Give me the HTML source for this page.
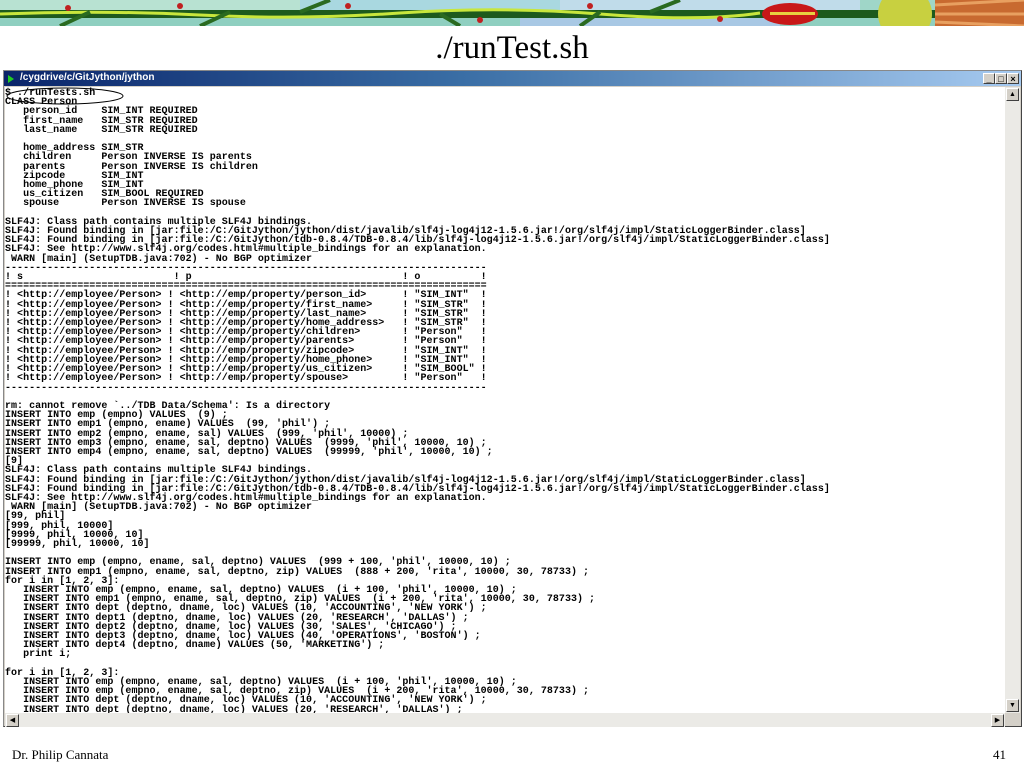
<!DOCTYPE html>
<html><head><meta charset="utf-8"><style>
html,body{margin:0;padding:0;width:1024px;height:768px;overflow:hidden;background:#fff;position:relative;font-family:"Liberation Serif",serif}
.ban{position:absolute;left:0;top:0;width:1024px;height:26px}
.title{position:absolute;left:0;width:1024px;top:28px;text-align:center;font-size:33px;color:#000;line-height:40px}
.win{position:absolute;left:3px;top:70px;width:1017px;height:655px;border:1px solid #888;border-right-color:#444;border-bottom-color:#444;background:#d4d0c8}
.tb{position:absolute;left:0;top:0;width:1017px;height:15px;background:linear-gradient(90deg,#0a246a 0%,#3a6ea5 45%,#a6caf0 100%)}
.tb span{position:absolute;left:16px;top:1px;font:bold 10px "Liberation Sans",sans-serif;color:#fff}
.tb i{position:absolute;left:4px;top:4px;width:0;height:0;border-left:6px solid #2c2;border-top:4px solid transparent;border-bottom:4px solid transparent}
.btn{position:absolute;top:2px;width:12px;height:11px;background:#d4d0c8;border:1px solid #fff;border-right-color:#404040;border-bottom-color:#404040;font:bold 9px "Liberation Sans",sans-serif;line-height:10px;text-align:center;color:#000;box-sizing:border-box}
.con{position:absolute;left:1px;top:16px;width:1000px;height:626px;background:#fff;overflow:hidden}
pre{margin:0;position:absolute;left:0;top:2px;font:bold 10px/9.2px "Liberation Mono",monospace;color:#000;letter-spacing:0.02px}
.vs{position:absolute;left:1001px;top:16px;width:15px;height:626px;background:#ebeae6}
.hs{position:absolute;left:1px;top:642px;width:1000px;height:14px;background:#ebeae6}
.ab{position:absolute;width:13px;height:13px;background:#d4d0c8;border:1px solid #fff;border-right-color:#404040;border-bottom-color:#404040;box-sizing:border-box;font:7px "Liberation Sans",sans-serif;line-height:11px;text-align:center}
.foot{position:absolute;top:747px;font-size:13px;color:#000}
</style></head><body>
<svg class="ban" viewBox="0 0 1024 26" preserveAspectRatio="none">
<rect width="1024" height="26" fill="#9fd6c8"/>
<rect x="0" y="0" width="300" height="12" fill="#b8e2d2"/>
<rect x="300" y="0" width="260" height="12" fill="#a9d8e0"/>
<rect x="560" y="0" width="300" height="12" fill="#c0dcea"/>
<rect x="0" y="18" width="1024" height="8" fill="#8fcfc0"/>
<rect x="520" y="18" width="260" height="8" fill="#a8c8e4"/>
<rect x="0" y="10" width="1024" height="8" fill="#1d5a1d"/>
<path d="M0 14 Q100 10 200 15 T400 13 T600 14 T760 13" stroke="#c8e63c" stroke-width="3" fill="none"/>
<path d="M60 26 L90 12 M200 26 L230 12 M330 0 L300 12 M460 26 L440 14 M680 0 L650 12 M580 26 L600 12" stroke="#2a6a20" stroke-width="4"/>
<ellipse cx="790" cy="14" rx="28" ry="11" fill="#c81818"/>
<rect x="770" y="12" width="45" height="3" fill="#e8d040"/>
<circle cx="905" cy="14" r="27" fill="#c8d040"/>
<rect x="935" y="0" width="89" height="26" fill="#c86a30"/>
<path d="M935 5 L1024 0 M935 14 L1024 14 M935 22 L1024 26" stroke="#e8a060" stroke-width="3"/>
<circle cx="68" cy="8" r="3" fill="#c02020"/><circle cx="180" cy="6" r="3" fill="#c02020"/><circle cx="348" cy="6" r="3" fill="#c02020"/><circle cx="480" cy="20" r="3" fill="#c02020"/><circle cx="590" cy="6" r="3" fill="#c02020"/><circle cx="720" cy="19" r="3" fill="#c02020"/>
</svg>
<div class="title">./runTest.sh</div>
<div class="win">
<div class="tb"><i></i><span>/cygdrive/c/GitJython/jython</span>
<div class="btn" style="left:979px">_</div><div class="btn" style="left:991px">□</div><div class="btn" style="left:1003px">×</div></div>
<div class="con"><pre>$ ./runTests.sh
CLASS Person
   person_id    SIM_INT REQUIRED
   first_name   SIM_STR REQUIRED
   last_name    SIM_STR REQUIRED

   home_address SIM_STR
   children     Person INVERSE IS parents
   parents      Person INVERSE IS children
   zipcode      SIM_INT
   home_phone   SIM_INT
   us_citizen   SIM_BOOL REQUIRED
   spouse       Person INVERSE IS spouse

SLF4J: Class path contains multiple SLF4J bindings.
SLF4J: Found binding in [jar:file:/C:/GitJython/jython/dist/javalib/slf4j-log4j12-1.5.6.jar!/org/slf4j/impl/StaticLoggerBinder.class]
SLF4J: Found binding in [jar:file:/C:/GitJython/tdb-0.8.4/TDB-0.8.4/lib/slf4j-log4j12-1.5.6.jar!/org/slf4j/impl/StaticLoggerBinder.class]
SLF4J: See http://www.slf4j.org/codes.html#multiple_bindings for an explanation.
 WARN [main] (SetupTDB.java:702) - No BGP optimizer
--------------------------------------------------------------------------------
! s                         ! p                                   ! o          !
================================================================================
! &lt;http://employee/Person&gt; ! &lt;http://emp/property/person_id&gt;      ! "SIM_INT"  !
! &lt;http://employee/Person&gt; ! &lt;http://emp/property/first_name&gt;     ! "SIM_STR"  !
! &lt;http://employee/Person&gt; ! &lt;http://emp/property/last_name&gt;      ! "SIM_STR"  !
! &lt;http://employee/Person&gt; ! &lt;http://emp/property/home_address&gt;   ! "SIM_STR"  !
! &lt;http://employee/Person&gt; ! &lt;http://emp/property/children&gt;       ! "Person"   !
! &lt;http://employee/Person&gt; ! &lt;http://emp/property/parents&gt;        ! "Person"   !
! &lt;http://employee/Person&gt; ! &lt;http://emp/property/zipcode&gt;        ! "SIM_INT"  !
! &lt;http://employee/Person&gt; ! &lt;http://emp/property/home_phone&gt;     ! "SIM_INT"  !
! &lt;http://employee/Person&gt; ! &lt;http://emp/property/us_citizen&gt;     ! "SIM_BOOL" !
! &lt;http://employee/Person&gt; ! &lt;http://emp/property/spouse&gt;         ! "Person"   !
--------------------------------------------------------------------------------

rm: cannot remove `../TDB Data/Schema': Is a directory
INSERT INTO emp (empno) VALUES  (9) ;
INSERT INTO emp1 (empno, ename) VALUES  (99, 'phil') ;
INSERT INTO emp2 (empno, ename, sal) VALUES  (999, 'phil', 10000) ;
INSERT INTO emp3 (empno, ename, sal, deptno) VALUES  (9999, 'phil', 10000, 10) ;
INSERT INTO emp4 (empno, ename, sal, deptno) VALUES  (99999, 'phil', 10000, 10) ;
[9]
SLF4J: Class path contains multiple SLF4J bindings.
SLF4J: Found binding in [jar:file:/C:/GitJython/jython/dist/javalib/slf4j-log4j12-1.5.6.jar!/org/slf4j/impl/StaticLoggerBinder.class]
SLF4J: Found binding in [jar:file:/C:/GitJython/tdb-0.8.4/TDB-0.8.4/lib/slf4j-log4j12-1.5.6.jar!/org/slf4j/impl/StaticLoggerBinder.class]
SLF4J: See http://www.slf4j.org/codes.html#multiple_bindings for an explanation.
 WARN [main] (SetupTDB.java:702) - No BGP optimizer
[99, phil]
[999, phil, 10000]
[9999, phil, 10000, 10]
[99999, phil, 10000, 10]

INSERT INTO emp (empno, ename, sal, deptno) VALUES  (999 + 100, 'phil', 10000, 10) ;
INSERT INTO emp1 (empno, ename, sal, deptno, zip) VALUES  (888 + 200, 'rita', 10000, 30, 78733) ;
for i in [1, 2, 3]:
   INSERT INTO emp (empno, ename, sal, deptno) VALUES  (i + 100, 'phil', 10000, 10) ;
   INSERT INTO emp1 (empno, ename, sal, deptno, zip) VALUES  (i + 200, 'rita', 10000, 30, 78733) ;
   INSERT INTO dept (deptno, dname, loc) VALUES (10, 'ACCOUNTING', 'NEW YORK') ;
   INSERT INTO dept1 (deptno, dname, loc) VALUES (20, 'RESEARCH', 'DALLAS') ;
   INSERT INTO dept2 (deptno, dname, loc) VALUES (30, 'SALES', 'CHICAGO') ;
   INSERT INTO dept3 (deptno, dname, loc) VALUES (40, 'OPERATIONS', 'BOSTON') ;
   INSERT INTO dept4 (deptno, dname) VALUES (50, 'MARKETING') ;
   print i;

for i in [1, 2, 3]:
   INSERT INTO emp (empno, ename, sal, deptno) VALUES  (i + 100, 'phil', 10000, 10) ;
   INSERT INTO emp (empno, ename, sal, deptno, zip) VALUES  (i + 200, 'rita', 10000, 30, 78733) ;
   INSERT INTO dept (deptno, dname, loc) VALUES (10, 'ACCOUNTING', 'NEW YORK') ;
   INSERT INTO dept (deptno, dname, loc) VALUES (20, 'RESEARCH', 'DALLAS') ;</pre>
<svg style="position:absolute;left:0;top:0" width="130" height="20"><ellipse cx="60" cy="9" rx="58" ry="8" fill="none" stroke="#000" stroke-width="1"/></svg>
</div>
<div class="vs"><div class="ab" style="left:1px;top:1px">▲</div><div class="ab" style="left:1px;top:612px">▼</div></div>
<div class="hs"><div class="ab" style="left:1px;top:1px">◀</div><div class="ab" style="left:986px;top:1px">▶</div></div>
</div>
<div class="foot" style="left:12px">Dr. Philip Cannata</div>
<div class="foot" style="left:993px">41</div>
</body></html>
